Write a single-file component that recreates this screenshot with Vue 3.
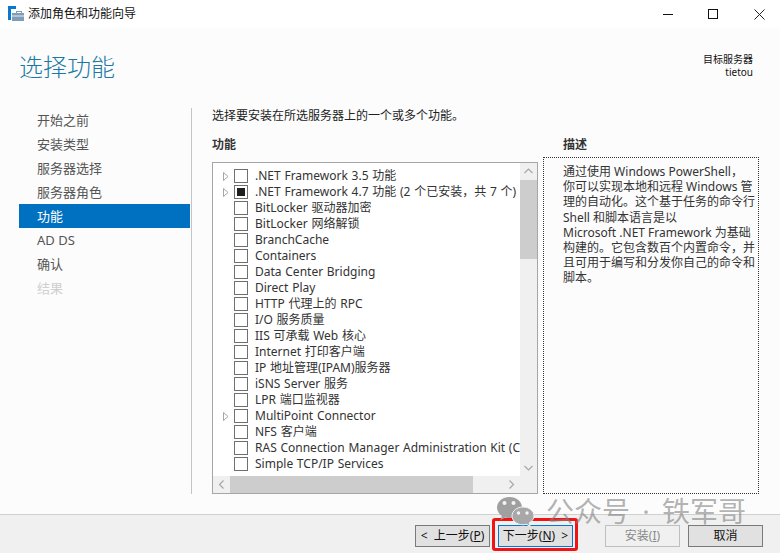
<script setup>
const steps = [
  { label: '开始之前' }, { label: '安装类型' }, { label: '服务器选择' }, { label: '服务器角色' },
  { label: '功能', active: true }, { label: 'AD DS' }, { label: '确认' }, { label: '结果', disabled: true }
]
const features = [
  { label: '.NET Framework 3.5 功能', expand: true },
  { label: '.NET Framework 4.7 功能 (2 个已安装，共 7 个)', expand: true, partial: true },
  { label: 'BitLocker 驱动器加密' }, { label: 'BitLocker 网络解锁' }, { label: 'BranchCache' },
  { label: 'Containers' }, { label: 'Data Center Bridging' }, { label: 'Direct Play' },
  { label: 'HTTP 代理上的 RPC' }, { label: 'I/O 服务质量' }, { label: 'IIS 可承载 Web 核心' },
  { label: 'Internet 打印客户端' }, { label: 'IP 地址管理(IPAM)服务器' }, { label: 'iSNS Server 服务' },
  { label: 'LPR 端口监视器' }, { label: 'MultiPoint Connector', expand: true }, { label: 'NFS 客户端' },
  { label: 'RAS Connection Manager Administration Kit (CMAK)' }, { label: 'Simple TCP/IP Services' }
]
const desc = [
  '通过使用 Windows PowerShell，', '你可以实现本地和远程 Windows 管', '理的自动化。这个基于任务的命令行',
  'Shell 和脚本语言是以', 'Microsoft .NET Framework 为基础', '构建的。它包含数百个内置命令，并',
  '且可用于编写和分发你自己的命令和', '脚本。'
]
</script>

<template>
  <div class="win">
    <header class="titlebar">
      <svg class="appicon" width="16" height="16" viewBox="0 0 16 16">
        <rect x="0" y="0" width="3" height="14" fill="#0a78d0" />
        <rect x="3" y="0" width="5" height="3" fill="#0a78d0" />
        <path d="M4 7h4V5h6v2h2v8H4z" fill="#7f9db8" />
        <rect x="4" y="9.500" width="12" height="1" fill="#e4edf4" />
        <rect x="9" y="6" width="4" height="1" fill="#fff" />
      </svg>
      <span class="wintitle">添加角色和功能向导</span>
      <div class="controls">
        <svg width="10" height="10" viewBox="0 0 10 10"><path d="M0 5.500h10" stroke="#111" /></svg>
        <svg width="11" height="11" viewBox="0 0 11 11"><rect x=".5" y=".5" width="9" height="9" fill="none" stroke="#111" /></svg>
        <svg width="11" height="11" viewBox="0 0 11 11"><path d="M.5.5l10 10M10.500.5l-10 10" stroke="#222" fill="none" /></svg>
      </div>
    </header>

    <section class="content">
      <div class="heading">
        <h1>选择功能</h1>
        <div class="target">
          <div>目标服务器</div>
          <div>tietou</div>
        </div>
      </div>
      <div class="body">
        <nav class="steps">
          <div v-for="s in steps" :key="s.label" class="step" :class="{ active: s.active, disabled: s.disabled }">{{ s.label }}</div>
        </nav>
        <main class="main">
          <p class="prompt">选择要安装在所选服务器上的一个或多个功能。</p>
          <div class="cols">
            <div class="featurecol">
              <h2>功能</h2>
              <div class="listbox">
                <div class="rows">
                  <div v-for="f in features" :key="f.label" class="row">
                    <span class="arrow"><svg v-if="f.expand" width="6" height="9" viewBox="0 0 6 9"><path d="M.5.5l4.500 4-4.500 4z" fill="#fff" stroke="#a6a6a6" /></svg></span>
                    <span class="check"><i v-if="f.partial"></i></span>
                    <span class="label">{{ f.label }}</span>
                  </div>
                </div>
                <div class="vbar">
                  <svg class="sarrow" width="17" height="17" viewBox="0 0 17 17"><path d="M4.500 10l4-4 4 4" fill="none" stroke="#a8a8a8" stroke-width="1.200" /></svg>
                  <div class="vthumb"></div>
                  <div class="fill"></div>
                  <svg class="sarrow" width="17" height="17" viewBox="0 0 17 17"><path d="M4.500 7l4 4 4-4" fill="none" stroke="#a8a8a8" stroke-width="1.200" /></svg>
                </div>
                <div class="hbar">
                  <svg class="sarrow" width="17" height="17" viewBox="0 0 17 17"><path d="M10.500 4.500l-4 4 4 4" fill="none" stroke="#a8a8a8" stroke-width="1.200" /></svg>
                  <div class="hthumb"></div>
                  <div class="fill"></div>
                  <svg class="sarrow" width="17" height="17" viewBox="0 0 17 17"><path d="M6.500 4.500l4 4-4 4" fill="none" stroke="#a8a8a8" stroke-width="1.200" /></svg>
                </div>
                <div class="corner"></div>
              </div>
            </div>
            <div class="desccol">
              <h2>描述</h2>
              <div class="descbox">
                <div v-for="l in desc" :key="l" class="dline">{{ l }}</div>
              </div>
            </div>
          </div>
        </main>
      </div>
    </section>

    <footer class="footer">
      <button class="btn">&lt;&nbsp; 上一步(<u>P</u>)</button>
      <button class="btn next">下一步(<u>N</u>) &nbsp;&gt;</button>
      <button class="btn off install">安装(<u>I</u>)</button>
      <button class="btn">取消</button>
    </footer>

    <div class="watermark">
      <svg width="40" height="32" viewBox="0 0 40 32">
        <path d="M13.500 2C6.600 2 1 6.700 1 12.500c0 3.400 1.900 6.300 4.800 8.300L4.600 25l4.600-2.500c1.400.4 2.800.6 4.300.6 6.900 0 12.500-4.700 12.500-10.600S20.400 2 13.500 2z" fill="#a0a0a0" />
        <path d="M27 12c-6.100 0-11 4-11 8.900s4.900 8.900 11 8.900c1.200 0 2.400-.2 3.500-.5l3.700 2.100-1-3.500c2.700-1.600 4.800-4 4.800-7C38 16 33.100 12 27 12z" fill="#a8a8a8" stroke="#f2f2f2" stroke-width="1" />
        <circle cx="8.500" cy="8" r="2" fill="#f4f4f4" /><circle cx="17.500" cy="8" r="2" fill="#f4f4f4" />
        <circle cx="22.500" cy="18" r="1.700" fill="#f4f4f4" /><circle cx="31" cy="18" r="1.700" fill="#f4f4f4" />
      </svg>
      <span class="wmtext">公众号 · 铁军哥</span>
    </div>
  </div>
</template>

<style>
html, body { margin: 0; padding: 0; }
</style>

<style scoped>
.win {
  position: relative;
  width: 780px;
  height: 553px;
  overflow: hidden;
  display: flex;
  flex-direction: column;
  background: #fcfcfc;
  color: #1e1e1e;
  font-family: "Noto Sans", "Noto Sans CJK SC", sans-serif;
  font-size: 12px;
}
.titlebar {
  height: 28px;
  flex: none;
  background: #fff;
  display: flex;
  align-items: center;
  padding-left: 8px;
  padding-right: 15px;
}
.appicon { margin-right: 4px; margin-top: -1px; }
.wintitle { color: #111; line-height: 28px; }
.controls { margin-left: auto; display: flex; gap: 35px; align-items: center; }
.content { flex: 1; min-height: 0; display: flex; flex-direction: column; }
.heading {
  height: 80px;
  flex: none;
  display: flex;
  justify-content: space-between;
  padding: 0 27px 0 19px;
}
h1 {
  margin: 22px 0 0;
  font-size: 24px;
  font-weight: 300;
  line-height: 34px;
  color: #1a78a4;
}
.target {
  margin-top: 25px;
  text-align: right;
  font-size: 10px;
  line-height: 13px;
  color: #111;
}
.body { flex: 1; min-height: 0; display: flex; }
.steps {
  width: 171px;
  margin-left: 19px;
  margin-right: 1px;
  flex: none;
}
.step {
  height: 24px;
  line-height: 24px;
  padding-left: 18px;
  font-size: 13px;
  color: #555;
}
.step.active { background: #0070c0; color: #fff; }
.step.disabled { color: #cfcfcf; }
.main {
  flex: none;
  width: 568px;
  height: 386px;
  border-left: 1px solid #c4c4c4;
  padding-left: 20px;
  box-sizing: border-box;
}
.prompt { margin: 0; height: 28px; line-height: 15px; color: #222; }
.cols { display: flex; gap: 5px; }
.featurecol { width: 326px; }
.desccol { width: 220px; }
h2 {
  margin: 0;
  height: 26px;
  line-height: 17px;
  font-size: 12px;
  font-weight: 700;
  color: #333;
}
.desccol h2 { padding-left: 20px; height: 21px; }
.listbox {
  height: 332px;
  box-sizing: border-box;
  border: 1px solid #a6a6a6;
  background: #fff;
  display: grid;
  grid-template-columns: 307px 17px;
  grid-template-rows: 313px 17px;
}
.rows { padding-top: 5px; overflow: hidden; }
.row { height: 16px; display: flex; align-items: center; white-space: nowrap; }
.arrow { width: 21px; flex: none; display: flex; justify-content: flex-end; padding-right: 5px; box-sizing: border-box; margin-top: 1px; }
.check {
  width: 12px;
  height: 12px;
  flex: none;
  border: 1px solid #707070;
  background: #fff;
  display: flex;
  align-items: center;
  justify-content: center;
  margin-right: 7px;
}
.check i { width: 8px; height: 8px; background: #1f1f1f; }
.label { color: #333; line-height: 16px; word-spacing: 0.6px; }
.vbar { background: #f0f0f0; display: flex; flex-direction: column; }
.hbar { background: #f0f0f0; display: flex; }
.fill { flex: 1; }
.sarrow { flex: none; display: block; }
.vthumb { height: 79px; flex: none; background: #cdcdcd; }
.hthumb { width: 243px; flex: none; background: #cdcdcd; }
.corner { background: #f0f0f0; }
.descbox {
  height: 337px;
  box-sizing: border-box;
  border: 1px dotted #333;
  padding: 6px 0 0 19px;
  color: #333;
  white-space: nowrap;
}
.dline { line-height: 15.200px; }
.footer {
  height: 39px;
  flex: none;
  box-sizing: border-box;
  background: #f0f0f0;
  border-top: 1px solid #d0d0d0;
  display: flex;
  align-items: flex-start;
  gap: 8px;
  padding: 10px 17px 0 0;
  justify-content: flex-end;
}
.btn {
  position: relative;
  width: 75px;
  height: 22px;
  padding: 0;
  box-sizing: border-box;
  border: 1px solid #7a7a7a;
  background: #e1e1e1;
  color: #111;
  font: inherit;
  line-height: 20px;
  border-radius: 0;
}
.btn u { text-decoration: underline; }
.next { border-color: #0078d7; }
.next::after {
  content: "";
  position: absolute;
  left: -7px;
  right: -6px;
  top: -8px;
  bottom: -5px;
  border: 3px solid #f01515;
  border-radius: 3px;
}
.install { margin-left: 24px; }
.off { background: #f0f0f0; border-color: #bfbfbf; color: #8a8a8a; }
.watermark {
  position: absolute;
  left: 496px;
  top: 495px;
  display: flex;
  align-items: center;
  gap: 10px;
  line-height: 30px;
  white-space: nowrap;
  pointer-events: none;
}
.wmtext {
  font-size: 28px;
  font-weight: 400;
  word-spacing: 5px;
  color: rgba(130, 130, 130, 0.62);
}
.watermark svg { flex: none; }
</style>
